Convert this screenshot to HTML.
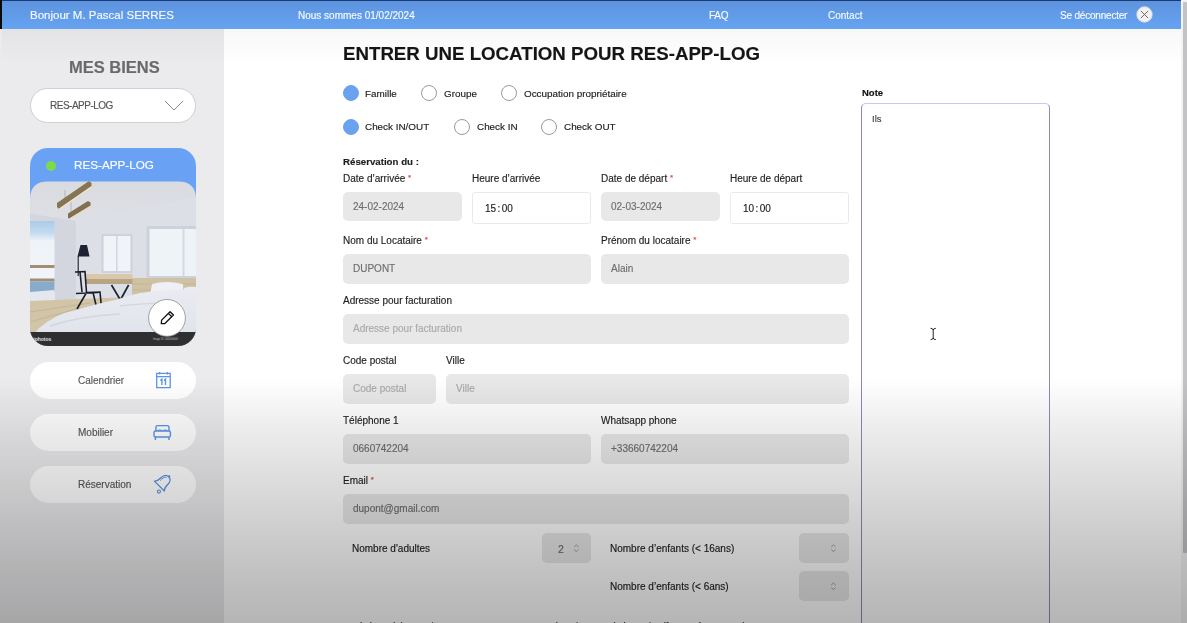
<!DOCTYPE html>
<html><head><meta charset="utf-8">
<style>
*{margin:0;padding:0;box-sizing:border-box}
html,body{width:1187px;height:623px;overflow:hidden;background:#fff;font-family:"Liberation Sans",sans-serif}
.a{position:absolute}
.t{position:absolute;white-space:nowrap;line-height:1;will-change:transform;-webkit-text-stroke:0.15px currentColor}
#hdr{left:0;top:0;width:1181px;height:29px;background:linear-gradient(#5d93dd,#65a3f1)}
#side{left:0;top:29px;width:224px;height:594px;background:#ebeaec}
.ht{color:#f6f9fe;font-size:10px}
.lab{font-size:10px;color:#1e1e1e}
.req{color:#e0463c;font-size:8px;vertical-align:2px}
.inp{position:absolute;background:#e8e8e8;border-radius:5px;height:30px}
.iv{font-size:10px;color:#6e6e6e}
.ph{font-size:10px;color:#a9a9a9}
.rad{position:absolute;width:16px;height:16px;border-radius:50%;border:1px solid #9a9a9a;background:#fff}
.rad.on{background:#6aa2ef;border-color:#6aa2ef}
.rl{font-size:9.9px;color:#1c1c1c}
.pill{position:absolute;left:30px;width:166px;height:37px;border-radius:19px;background:#fff}
.pt{font-size:10px;color:#585858}
</style></head><body>
<!-- header -->
<div id="hdr" class="a"></div>
<div class="a" style="left:0;top:0;width:1187px;height:1px;background:#1d3a78"></div>
<div class="t ht" style="left:30px;top:10px;font-size:11.5px">Bonjour M. Pascal SERRES</div>
<div class="t ht" style="left:298px;top:10.7px;font-size:10px">Nous sommes 01/02/2024</div>
<div class="t ht" style="left:709px;top:10.7px;font-size:10px;letter-spacing:-0.3px">FAQ</div>
<div class="t ht" style="left:828px;top:10.7px;font-size:10px">Contact</div>
<div class="t ht" style="left:1060px;top:10.7px;font-size:10px;letter-spacing:-0.2px">Se déconnecter</div>
<svg class="a" style="left:1135.7px;top:6.2px" width="17" height="17" viewBox="0 0 17 17"><circle cx="8.5" cy="8.5" r="7.9" fill="#f2f2f4" stroke="#b9c3d6" stroke-width="0.7"/><path d="M4.9 4.9L12.1 12.1M12.1 4.9L4.9 12.1" stroke="#555" stroke-width="0.85"/></svg>
<!-- left black bar -->
<div class="a" style="left:0;top:0;width:2px;height:623px;background:#0a0a0a"></div>

<!-- sidebar -->
<div id="side" class="a"></div>
<div class="a" style="left:2px;top:29px;width:222px;height:594px;background:#ebeaec"></div>
<div class="t" style="left:69px;top:58.5px;font-size:16.5px;font-weight:bold;color:#6a6a6a">MES BIENS</div>
<div class="a" style="left:30px;top:88px;width:166px;height:35px;border-radius:18px;background:#fff;border:1px solid #cfcfcf"></div>
<div class="t" style="left:49.5px;top:100.8px;font-size:10px;letter-spacing:-0.5px;color:#555">RES-APP-LOG</div>
<svg class="a" style="left:164px;top:100px" width="20" height="11" viewBox="0 0 20 11"><path d="M1 1L10 10L19 1" fill="none" stroke="#8a8a8a" stroke-width="1"/></svg>

<!-- card -->
<div id="card" class="a" style="left:30px;top:148px;width:166px;height:198px;border-radius:18px;overflow:hidden;background:#69a2f5">
<svg class="a" style="left:0;top:0" width="166" height="198" viewBox="30 148 166 198">
<defs>
<linearGradient id="ceil" x1="0" y1="0" x2="0" y2="1"><stop offset="0" stop-color="#d9dbe1"/><stop offset="0.5" stop-color="#e2e4e8"/><stop offset="1" stop-color="#d8dae1"/></linearGradient>
<linearGradient id="sky" x1="0" y1="0" x2="0" y2="1"><stop offset="0" stop-color="#a9cbe8"/><stop offset="0.15" stop-color="#c4dbef"/><stop offset="0.25" stop-color="#eef3f8"/><stop offset="1" stop-color="#f3f5f8"/></linearGradient>
<linearGradient id="bed" x1="0" y1="0" x2="0" y2="1"><stop offset="0" stop-color="#e9ebf1"/><stop offset="1" stop-color="#dfe2ea"/></linearGradient>
<filter id="bl" x="-5%" y="-5%" width="110%" height="110%"><feGaussianBlur stdDeviation="0.45"/></filter>
<clipPath id="pc"><path d="M30 199 Q30 181.5 48 181.5 L178 181.5 Q196 181.5 196 199 L196 346 L30 346 Z"/></clipPath>
</defs>
<g clip-path="url(#pc)"><g filter="url(#bl)">
<rect x="30" y="181" width="166" height="165" fill="url(#ceil)"/>
<!-- right wall -->
<path d="M76 221 L196 197 L196 302 L76 302 Z" fill="#dcdfe6"/>
<!-- left wall -->
<path d="M30 213.5 L76 221 L76 302 L30 302 Z" fill="#d3d6de"/>
<!-- left window -->
<rect x="30" y="221" width="24.5" height="80" fill="url(#sky)"/>
<rect x="30" y="265" width="24.5" height="3" fill="#a08f74"/>
<rect x="30" y="278.5" width="24.5" height="3" fill="#a08f74"/>
<rect x="30" y="281.5" width="24.5" height="10.5" fill="#88aacb"/>
<path d="M30 292 L54.5 290 L54.5 301 L30 301 Z" fill="#e4e8ee"/>
<!-- middle window -->
<rect x="101.5" y="234" width="31" height="39" fill="#cdd1d9"/>
<rect x="103.5" y="236" width="27" height="35" fill="#f0f3f7"/>
<rect x="116" y="236" width="1.6" height="35" fill="#d4d8df"/>
<!-- right window -->
<rect x="146.5" y="226" width="50" height="52" fill="#cdd1d9"/>
<rect x="149.5" y="229" width="47" height="47" fill="#eef3f8"/>
<rect x="182.5" y="229" width="2" height="47" fill="#d4d8df"/>
<!-- wires -->
<path d="M65 190 V199 M71 199 V212" stroke="#9a9ca4" stroke-width="0.6"/>
<!-- beams -->
<path d="M57 203 L89 181 L91.5 183 L91.5 186.5 L59 209 L57 207 Z" fill="#857553"/>
<path d="M59 208.5 L91.5 186 L91.5 187.6 L59.5 210 Z" fill="#eee4cf"/>
<path d="M68 213.5 L88 201 L90.5 202.5 L90.5 206 L69 219 L68 217.5 Z" fill="#807050"/>
<path d="M69 218.6 L90.5 205.5 L90.5 207 L69.5 220 Z" fill="#e6dcc6"/>
<!-- headboard -->
<rect x="132" y="278" width="64" height="22" fill="#cfc1a3"/>
<path d="M132 284 H196 M132 290 H196" stroke="#bfae8e" stroke-width="0.6"/>
<!-- floor -->
<path d="M30 301 L132 297 L132 340 L30 340 Z" fill="#d2c4a7"/>
<path d="M30 312 L90 303 M30 322 L80 308" stroke="#bfae90" stroke-width="0.7"/>
<!-- lamp -->
<path d="M80.5 245 L87 245 L89.5 256.5 L77.5 256.5 Z" fill="#1f2230"/>
<rect x="77.6" y="256" width="1.2" height="20" fill="#2a2c38"/>
<!-- desk -->
<rect x="86" y="274" width="46.5" height="5" fill="#d9c9aa"/>
<rect x="86" y="279" width="46.5" height="5" fill="#b7a484"/>
<path d="M111.5 285 L120.4 300 L128.6 285" fill="none" stroke="#1e2030" stroke-width="1.7"/>
<!-- chair -->
<path d="M75 272 L85 271.5 L86.5 292.5 L100 292 L101.5 308 M86.5 292.5 L77 309 M80 272 L82 292 M93 292.5 L96.5 307 M76 293.5 L98 292.5" fill="none" stroke="#1d1f2c" stroke-width="1.6"/>
<!-- pillows -->
<path d="M149 300 L152 284 Q166 280 183 284 L184 300 Z" fill="#eef0f5"/>
<path d="M184 288 Q190 286 196 287 L196 300 L184 300 Z" fill="#e9ecf2"/>
<!-- bed -->
<path d="M30 340 L38 329 Q55 314 76 310 Q100 303 115 300 Q130 295 140 293 Q170 289 196 290 L196 346 L30 346 Z" fill="url(#bed)"/>
<path d="M50 326 Q80 316 120 314 M120 306 Q150 302 175 304" fill="none" stroke="#d3d6df" stroke-width="1.4"/>
</g>
<!-- bottom strip -->
<rect x="30" y="332" width="166" height="14" fill="#2f2f31"/>
<text x="33" y="341" font-size="5" fill="#e6e6e6" font-family="Liberation Sans" font-weight="bold">tphotos</text>
<text x="153" y="340" font-size="2.6" fill="#bbb" font-family="Liberation Sans">Image ID: 000000000</text>
</g>
</svg>
</div>
<svg class="a" style="left:148px;top:298.5px" width="38" height="38" viewBox="148 298.5 38 38"><circle cx="167" cy="317.4" r="18.4" fill="#fff" stroke="#8c8c8c" stroke-width="0.8"/>
<path d="M161.3 323.2 L161.6 319.6 L170.1 311.2 L173.4 314.5 L164.9 323 Z M168.4 312.9 L171.7 316.2" fill="none" stroke="#111" stroke-width="1.3" stroke-linejoin="round"/></svg>
<div class="a" style="left:45.5px;top:160.5px;width:10px;height:10px;border-radius:50%;background:#7cdb4a"></div>
<div class="t" style="left:74px;top:159px;font-size:11.7px;color:#fff">RES-APP-LOG</div>

<!-- menu pills -->
<div class="pill" style="top:362px"></div>
<div class="t pt" style="left:77.5px;top:375.5px">Calendrier</div>
<div class="pill" style="top:414px"></div>
<div class="t pt" style="left:77.5px;top:427.5px">Mobilier</div>
<div class="pill" style="top:466px"></div>
<div class="t pt" style="left:77.5px;top:479.5px">Réservation</div>


<svg class="a" style="left:150px;top:368px" width="26" height="26" viewBox="150 368 26 26">
<path d="M156.7 373.4 H170.2 V387.6 H156.7 Z M156.7 376.6 H170.2" fill="none" stroke="#5b94e6" stroke-width="1.3"/>
<path d="M159.6 372 V374.6 M167.4 372 V374.6" stroke="#5b94e6" stroke-width="1.3"/>
<path d="M160.3 380.6 L161.9 379.2 V384.9 M163.9 380.6 L165.5 379.2 V384.9" fill="none" stroke="#5b94e6" stroke-width="1.35"/>
</svg>
<svg class="a" style="left:150px;top:420px" width="26" height="26" viewBox="150 420 26 26">
<path d="M155.9 431 V427.3 Q155.9 425.6 157.6 425.6 H167.3 Q169 425.6 169 427.3 V431" fill="none" stroke="#5b94e6" stroke-width="1.4"/>
<path d="M157.5 430.6 Q159.5 429.4 161.8 430.6 M163 430.6 Q165 429.4 167.4 430.6" fill="none" stroke="#5b94e6" stroke-width="1.2"/>
<rect x="154" y="431" width="16.4" height="6" rx="1.6" fill="none" stroke="#5b94e6" stroke-width="1.4"/>
<path d="M155.4 437 V440 M169 437 V440" stroke="#5b94e6" stroke-width="1.4"/>
</svg>
<svg class="a" style="left:150px;top:472px" width="26" height="26" viewBox="150 472 26 26">
<g transform="translate(159.35 486.1) rotate(45) translate(0 -5)">
<path d="M-7 5 C-5.5 3.6 -4.8 1.2 -4.8 -2 C-4.8 -6 -2.6 -8.2 0 -8.2 C2.6 -8.2 4.8 -6 4.8 -2 C4.8 1.2 5.5 3.6 7 5 Z" fill="none" stroke="#5b94e6" stroke-width="1.25" stroke-linejoin="round"/>
<path d="M-3.3 0.5 C-3.4 -2.5 -3.2 -5 -1.2 -6.4" fill="none" stroke="#5b94e6" stroke-width="0.9"/>
<circle cx="0" cy="-9" r="1.1" fill="#5b94e6"/>
</g>
<circle cx="158.9" cy="491.6" r="1.55" fill="none" stroke="#5b94e6" stroke-width="1.1"/>
</svg>

<!-- main -->
<div class="t" style="left:343px;top:44.5px;font-size:18.7px;font-weight:bold;color:#161616">ENTRER UNE LOCATION POUR RES-APP-LOG</div>

<div class="rad on" style="left:343px;top:85px"></div><div class="t rl" style="left:365px;top:88.5px">Famille</div>
<div class="rad" style="left:421px;top:85px"></div><div class="t rl" style="left:443.5px;top:88.5px">Groupe</div>
<div class="rad" style="left:501px;top:85px"></div><div class="t rl" style="left:523.5px;top:88.5px">Occupation propriétaire</div>

<div class="rad on" style="left:343px;top:119px"></div><div class="t rl" style="left:365px;top:122px">Check IN/OUT</div>
<div class="rad" style="left:454px;top:119px"></div><div class="t rl" style="left:476.5px;top:122px">Check IN</div>
<div class="rad" style="left:541px;top:119px"></div><div class="t rl" style="left:563.5px;top:122px">Check OUT</div>

<div class="t lab" style="left:343px;top:157px;font-weight:bold;font-size:9.7px">Réservation du :</div>
<div class="t lab" style="left:343px;top:173.5px">Date d’arrivée <span class="req">*</span></div>
<div class="t lab" style="left:472px;top:173.5px">Heure d’arrivée</div>
<div class="t lab" style="left:601px;top:173.5px">Date de départ <span class="req">*</span></div>
<div class="t lab" style="left:730px;top:173.5px">Heure de départ</div>

<div class="inp" style="left:343px;top:192px;width:119px;height:29px"></div>
<div class="t iv" style="left:353px;top:202px">24-02-2024</div>
<div class="a" style="left:472px;top:192px;width:119px;height:32px;background:#fff;border:1px solid #eaeaea;border-radius:3px"></div>
<div class="t" style="left:484.5px;top:204.2px;font-size:10px;color:#1e1e1e">15<span style="margin:0 1.4px">:</span>00</div>
<div class="inp" style="left:601px;top:192px;width:119px;height:29px"></div>
<div class="t iv" style="left:611px;top:202px">02-03-2024</div>
<div class="a" style="left:730px;top:192px;width:119px;height:32px;background:#fff;border:1px solid #eaeaea;border-radius:3px"></div>
<div class="t" style="left:742.5px;top:204.2px;font-size:10px;color:#1e1e1e">10<span style="margin:0 1.4px">:</span>00</div>

<div class="t lab" style="left:343px;top:235.5px">Nom du Locataire <span class="req">*</span></div>
<div class="t lab" style="left:601px;top:235.5px">Prénom du locataire <span class="req">*</span></div>
<div class="inp" style="left:343px;top:254px;width:248px"></div>
<div class="t iv" style="left:353px;top:264px">DUPONT</div>
<div class="inp" style="left:601px;top:254px;width:248px"></div>
<div class="t iv" style="left:611px;top:264px">Alain</div>

<div class="t lab" style="left:343px;top:295.5px">Adresse pour facturation</div>
<div class="inp" style="left:343px;top:314px;width:506px"></div>
<div class="t ph" style="left:353px;top:324px">Adresse pour facturation</div>

<div class="t lab" style="left:343px;top:355.5px">Code postal</div>
<div class="t lab" style="left:446px;top:355.5px">Ville</div>
<div class="inp" style="left:343px;top:374px;width:93px"></div>
<div class="t ph" style="left:353px;top:384px">Code postal</div>
<div class="inp" style="left:446px;top:374px;width:403px"></div>
<div class="t ph" style="left:456px;top:384px">Ville</div>

<div class="t lab" style="left:343px;top:415.5px">Téléphone 1</div>
<div class="t lab" style="left:601px;top:415.5px">Whatsapp phone</div>
<div class="inp" style="left:343px;top:434px;width:248px"></div>
<div class="t iv" style="left:353px;top:444px">0660742204</div>
<div class="inp" style="left:601px;top:434px;width:248px"></div>
<div class="t iv" style="left:611px;top:444px">+33660742204</div>

<div class="t lab" style="left:343px;top:475.5px">Email <span class="req">*</span></div>
<div class="inp" style="left:343px;top:494px;width:506px"></div>
<div class="t iv" style="left:353px;top:504px">dupont@gmail.com</div>

<div class="t lab" style="left:352px;top:543.5px">Nombre d'adultes</div>
<div class="inp" style="left:542px;top:533px;width:49px"></div>
<div class="t iv" style="left:557.5px;top:543.5px;font-size:10.5px">2</div>
<div class="t lab" style="left:610px;top:543.5px">Nombre d’enfants (&lt; 16ans)</div>
<div class="inp" style="left:799px;top:533px;width:50px"></div>
<div class="t lab" style="left:610px;top:581.5px">Nombre d’enfants (&lt; 6ans)</div>
<div class="inp" style="left:799px;top:571px;width:50px"></div>


<svg class="a" style="left:570px;top:542px" width="12" height="12" viewBox="570 542 12 12"><path d="M574.2 547 L576.4 545 L578.6 547 M574.2 549.6 L576.4 551.6 L578.6 549.6" fill="none" stroke="#8a8a8a" stroke-width="0.8"/></svg>
<svg class="a" style="left:827px;top:542px" width="12" height="12" viewBox="827 542 12 12"><path d="M831.2 547 L833.4 545 L835.6 547 M831.2 549.6 L833.4 551.6 L835.6 549.6" fill="none" stroke="#8a8a8a" stroke-width="0.8"/></svg>
<svg class="a" style="left:827px;top:580px" width="12" height="12" viewBox="827 580 12 12"><path d="M831.2 585 L833.4 583 L835.6 585 M831.2 587.6 L833.4 589.6 L835.6 587.6" fill="none" stroke="#8a8a8a" stroke-width="0.8"/></svg>
<div class="t lab" style="left:343px;top:620.5px;font-size:9.6px">Seuls les adultes majeurs peuvent contracter une location pour le locataire (facture à son nom)</div>

<!-- note -->
<div class="t" style="left:862px;top:88px;font-size:9.5px;font-weight:bold;color:#111">Note</div>
<div class="a" style="left:861px;top:102.5px;width:189px;height:540px;border:1px solid #8b8ab8;border-top-color:#c9c8f2;border-radius:5px;background:#fff"></div>
<div class="t" style="left:872px;top:114px;font-size:9.5px;color:#444">Ils</div>

<svg class="a" style="left:928px;top:326px" width="10" height="16" viewBox="928 326 10 16"><path d="M930.6 328.3 Q933.2 328.6 933.2 330 V338 Q933.2 339.4 930.6 339.6 M935.8 328.3 Q933.2 328.6 933.2 330 M935.8 339.6 Q933.2 339.4 933.2 338" fill="none" stroke="#222" stroke-width="1"/></svg>
<div class="a" style="left:2px;top:29px;width:1179px;height:36px;background:linear-gradient(rgba(0,0,0,0.028),rgba(0,0,0,0))"></div>
<!-- bottom overlay -->
<div class="a" style="left:0;top:378px;width:1187px;height:245px;background:linear-gradient(rgba(0,0,0,0),rgba(0,0,0,0.07) 20%,rgba(0,0,0,0.13) 40%,rgba(0,0,0,0.19) 60%,rgba(0,0,0,0.245) 80%,rgba(0,0,0,0.29))"></div>
<!-- scrollbar -->
<div class="a" style="left:1181px;top:0;width:6px;height:623px;background:#f3f3f3"></div>
<div class="a" style="left:1183px;top:2px;width:4px;height:551px;background:#c3c2c4;border-radius:1px"></div>
<div class="a" style="left:1181px;top:378px;width:6px;height:245px;background:linear-gradient(rgba(0,0,0,0),rgba(0,0,0,0.07) 20%,rgba(0,0,0,0.13) 40%,rgba(0,0,0,0.19) 60%,rgba(0,0,0,0.245) 80%,rgba(0,0,0,0.29))"></div>
</body></html>
